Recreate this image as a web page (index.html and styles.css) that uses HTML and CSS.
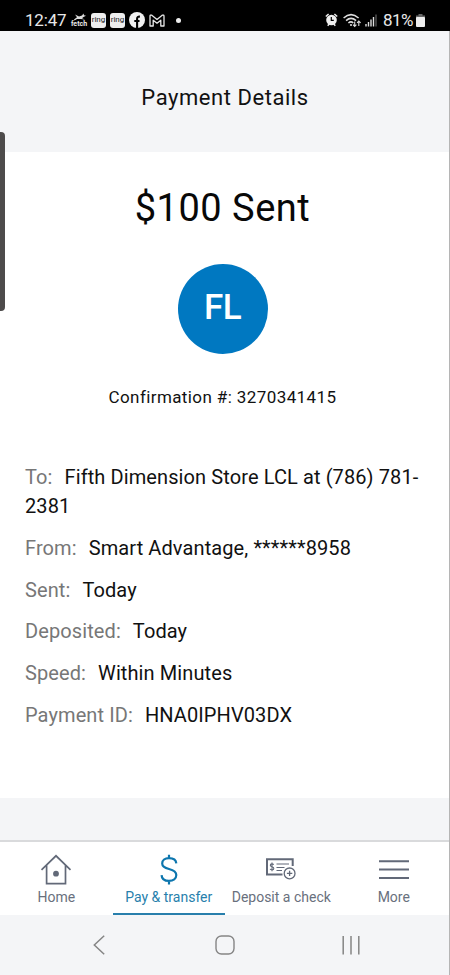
FILE: index.html
```html
<!DOCTYPE html>
<html lang="en">
<head>
<meta charset="utf-8">
<title>Payment Details</title>
<link rel="stylesheet" href="styles.css">
</head>
<body>
<div class="phone">
  <div class="status">
    <div class="status-left">
      <span class="clock">12:47</span>
      <span class="fetch">
        <svg width="16" height="8" viewBox="0 0 16 8"><path d="M3 6.5 6 4.2 4 1.5 8 3.4 11 2.5 12.5.5 13 2.2 15 2.8 12.5 4 11 5.2 14 6.4 9.5 5.9 6 6 3.5 7.5z" fill="#ddd"/></svg>
        <span>fetch</span>
      </span>
      <span class="ring">ring</span>
      <span class="ring">ring</span>
      <svg class="fb" width="16" height="16" viewBox="0 0 16 16"><circle cx="8" cy="8" r="8" fill="#f0f0f0"/><path d="M8.1 16V9.9M5.3 9h5.2M8.1 10V6.7Q8.1 4.4 10.9 4.6" fill="none" stroke="#000" stroke-width="2.1"/></svg>
      <svg class="gmail" width="16" height="13" viewBox="0 0 16 13"><path d="M1 12V2.2Q1 .6 2.8 1.2L8 5.4l5.2-4.2Q15 .6 15 2.2V12h-3.2V6.2L8 9.2 4.2 6.2V12z" fill="none" stroke="#e8e8e8" stroke-width="1.3" stroke-linejoin="round"/></svg>
      <i class="dot"></i>
    </div>
    <div class="status-right">
      <svg width="13" height="14" viewBox="0 0 13 14"><path d="M.8 3.5 3.6 1M12.2 3.5 9.4 1M2.7 12.8l1.5-1.7M10.3 12.8 8.8 11.1" stroke="#eee" stroke-width="1.5"/><circle cx="6.5" cy="7" r="5.3" fill="#eee"/><path d="M6.3 3.9v3.4h2.5" fill="none" stroke="#000" stroke-width="1.2"/></svg>
      <svg class="wifi" width="19" height="15" viewBox="0 0 19 15"><g fill="none" stroke="#ddd" stroke-width="1.5"><path d="M.6 5Q8 -1.8 15.6 5M3.1 7.6Q8 3.2 13.1 7.6M5.4 10Q8 7.8 10.3 10"/><path d="M11.7 8.5v5M10 11.7l1.7 1.8 1.7-1.8M15.8 13V8M14.1 9.8 15.8 8l1.8 1.8" stroke-width="1.1"/></g><circle cx="8" cy="12" r="1.1" fill="#ddd"/></svg>
      <svg class="signal" width="12" height="13" viewBox="0 0 12 13"><path d="M1 12.5V10M3.5 12.5V8M6 12.5V5.5M8.5 12.5V3" stroke="#ddd" stroke-width="1.4"/><path d="M11 12.5V.5" stroke="#555" stroke-width="1.4"/></svg>
      <span class="percent">81%</span>
      <svg width="9" height="13" viewBox="0 0 9 13"><path d="M2.5 0h4v1.5H9V4H0V1.5h2.5z" fill="#666"/><path d="M0 3h9v8.5q0 1.2-1.2 1.2H1.2Q0 12.700 11.5z" fill="none"/><rect y="3" width="9" height="10" rx="1" fill="#eee"/></svg>
    </div>
  </div>
  <header class="header"><h1>Payment Details</h1></header>
  <main class="content">
    <h2 class="amount">$100 Sent</h2>
    <div class="avatar"><span>FL</span></div>
    <p class="confirm">Confirmation #: 3270341415</p>
    <div class="details">
      <p><span class="label">To:</span><span class="to">Fifth Dimension Store LCL at (786) 781-<br>2381</span></p>
      <p><span class="label">From:</span><span>Smart Advantage, ******8958</span></p>
      <p><span class="label">Sent:</span><span>Today</span></p>
      <p><span class="label">Deposited:</span><span>Today</span></p>
      <p><span class="label">Speed:</span><span>Within Minutes</span></p>
      <p><span class="label">Payment ID:</span><span class="pid">HNA0IPHV03DX</span></p>
    </div>
  </main>
  <nav class="tabs">
    <div class="tab">
      <svg width="32" height="32" viewBox="0 0 32 32" fill="none" stroke="#626978" stroke-width="1.7"><path d="M1.500 15.800 16 1.800 30.500 15.800M6.600 11.500V29.600H25.500V11.500"/><circle cx="16" cy="19.700" r="2.900" fill="#626978" stroke="none"/></svg>
      <span class="t-home">Home</span>
    </div>
    <div class="tab active">
      <svg width="32" height="32" viewBox="0 0 32 32" fill="none" stroke="#0d76ae" stroke-width="2.200"><path d="M23.300 9.300C23 6 20 4.200 16 4.200C11.800 4.200 9.200 6.400 9.200 9.500C9.200 12.700 12 14 16 15C20.300 16.100 23.300 17.600 23.300 21.100C23.300 24.700 20.200 26.900 16 26.900C11.500 26.900 8.700 24.600 8.600 21.100M16 .8V4.500M16 26.500V30.500"/></svg>
      <span class="t-pay">Pay &amp; transfer</span>
    </div>
    <div class="tab">
      <svg width="32" height="32" viewBox="0 0 32 32" fill="none" stroke="#626978"><path d="M17.500 20.600H2V5.200H27.700V12" stroke-width="2"/><path d="M11.500 10H24M11.500 13.500H19.500M11.500 16.500H17" stroke-width="1.200"/><path d="M8.600 10.900Q8.200 9.900 7 9.900Q5.300 9.900 5.300 11.300Q5.300 12.400 7 12.800Q8.800 13.200 8.800 14.600Q8.800 16 7 16Q5.500 16 5.100 14.900M7 8.600V17.300" stroke-width="1.100"/><circle cx="24.600" cy="19.400" r="5.400" fill="#fff" stroke-width="1.300"/><path d="M21.900 19.400H27.300M24.600 16.700V22.100" stroke-width="1.300"/></svg>
      <span class="t-deposit">Deposit a check</span>
    </div>
    <div class="tab">
      <svg width="32" height="32" viewBox="0 0 32 32" stroke="#626978" stroke-width="2"><path d="M1 7.200H31M1 15.600H31M1 24H31"/></svg>
      <span class="t-more">More</span>
    </div>
  </nav>
  <div class="system">
    <svg width="14" height="22" viewBox="0 0 14 22"><path d="M12.200 1.800 2.300 11 12.200 20.300" fill="none" stroke="#858585" stroke-width="1.500"/></svg>
    <svg width="20" height="20" viewBox="0 0 20 20"><rect x="1" y="1" width="18" height="18" rx="5.500" fill="none" stroke="#858585" stroke-width="1.400"/></svg>
    <svg width="20" height="20" viewBox="0 0 20 20"><path d="M2.200 1V19.500M10 1V19.500M17.800 1V19.500" stroke="#858585" stroke-width="1.500"/></svg>
  </div>
  <div class="edge-handle"></div>
  <div class="edge-line"></div>
</div>
</body>
</html>
```
FILE: styles.css
```css
* { box-sizing: border-box; }
body { margin: 0; font-family: Roboto, "Liberation Sans", sans-serif; color: #111; }
h1, h2, p { margin: 0; font-weight: 400; }
svg { display: block; flex: none; }
.phone { position: relative; width: 450px; height: 975px; overflow: hidden; display: flex; flex-direction: column; background: #f4f5f7; }
.status { height: 31px; background: #000; color: #e8e8e8; display: flex; justify-content: space-between; align-items: center; padding: 9px 25px 0 25px; }
.status-left, .status-right { display: flex; align-items: center; height: 22px; }
.clock { font-size: 17px; line-height: 22px; width: 46px; letter-spacing: -0.2px; white-space: nowrap; }
.fetch { width: 16px; display: flex; flex-direction: column; align-items: center; font-size: 7px; font-weight: 700; line-height: 7px; }
.ring { width: 15px; height: 15px; margin-left: 4px; border-radius: 3px; background: #eee; color: #222; font-size: 8px; line-height: 13px; text-align: center; }
.fb { margin-left: 4px; }
.gmail { margin-left: 4px; }
.dot { width: 5px; height: 5px; margin-left: 11px; border-radius: 50%; background: #eee; }
.wifi { margin-left: 5px; }
.signal { margin-left: 3px; }
.percent { font-size: 17px; line-height: 22px; width: 33px; margin-left: 6px; letter-spacing: -0.5px; }
.header { height: 121px; padding-top: 12px; display: flex; align-items: center; justify-content: center; }
.header h1 { font-size: 22px; line-height: 28px; letter-spacing: 0.55px; }
.content { height: 646px; background: #fff; padding: 30px 5px 0 0; display: flex; flex-direction: column; align-items: center; }
.amount { font-size: 38px; line-height: 52px; letter-spacing: 0.5px; color: #080808; }
.avatar { width: 90px; height: 90px; margin-top: 30px; border-radius: 50%; background: #0078c1; color: #fff; display: flex; align-items: center; justify-content: center; font-size: 35px; font-weight: 500; letter-spacing: -0.5px; padding-bottom: 4px; }
.confirm { margin-top: 31px; font-size: 17px; line-height: 24px; letter-spacing: 0.4px; }
.details { align-self: stretch; margin-top: 54px; padding-left: 25px; font-size: 20px; line-height: 29.200px; letter-spacing: 0.1px; }
.details p { margin-bottom: 12.500px; white-space: nowrap; }
.label { color: #777; margin-right: 12px; }
.tabs { height: 75px; margin-top: 42px; border-top: 2px solid #d9dadc; background: #fff; display: grid; grid-template-columns: repeat(4, 1fr); }
.tab { display: flex; flex-direction: column; align-items: center; padding-top: 12px; color: #69707d; font-size: 14px; line-height: 20px; white-space: nowrap; }
.tab svg { margin-bottom: 1px; }
.tab.active { color: #287fac; border-bottom: 2px solid #287fac; }
.system { height: 60px; display: grid; grid-template-columns: 198px 54px 198px; align-items: center; justify-items: center; }
.edge-handle { position: absolute; left: -4px; top: 132px; width: 9px; height: 179px; border-radius: 4px; background: #4d4b4b; }
.edge-line { position: absolute; right: 0; top: 31px; width: 1px; height: 944px; background: #b5b5b5; }
```
